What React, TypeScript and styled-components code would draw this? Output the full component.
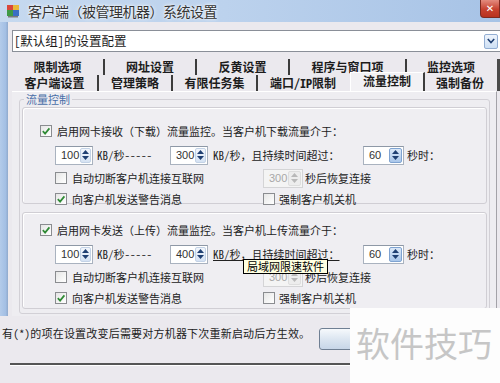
import styled, { createGlobalStyle } from 'styled-components';

const cjk = `"Noto Sans Mono CJK SC", "Noto Sans CJK SC", "Liberation Sans", sans-serif`;

const GlobalStyle = createGlobalStyle`
  html, body {
    margin: 0;
    padding: 0;
    background: #ebe9ee;
  }
  body {
    font-family: ${cjk};
  }
`;

type TabDef = { label: string; width: number; sep?: boolean; active?: boolean };

const topTabs: TabDef[] = [
  { label: '限制选项', width: 93, sep: true },
  { label: '网址设置', width: 92, sep: true },
  { label: '反黄设置', width: 93, sep: true },
  { label: '程序与窗口项', width: 117, sep: true },
  { label: '监控选项', width: 90 },
];

const bottomTabs: TabDef[] = [
  { label: '客户端设置', width: 87, sep: true },
  { label: '管理策略', width: 74, sep: true },
  { label: '有限任务集', width: 85, sep: true },
  { label: '端口/IP限制', width: 92 },
  { label: '流量控制', width: 75, sep: true, active: true },
  { label: '强制备份', width: 72 },
];

const sections = [
  {
    title: '启用网卡接收（下载）流量监控。当客户机下载流量介于：',
    low: '100',
    high: '300',
    hover: false,
    pt: 11,
  },
  {
    title: '启用网卡发送（上传）流量监控。当客户机上传流量介于：',
    low: '100',
    high: '400',
    hover: true,
    pt: 5,
  },
];

const CheckBox = ({ checked }: { checked?: boolean }) => (
  <Box>
    {checked ? (
      <svg width="10" height="10" viewBox="0 0 10 10">
        <path d="M1.8 5.2 L4.1 7.6 L8.4 2.4" stroke="#2f8a35" strokeWidth="1.7" fill="none" />
      </svg>
    ) : null}
  </Box>
);

const Spin = ({
  value,
  width,
  disabled,
  hot,
}: {
  value: string;
  width: number;
  disabled?: boolean;
  hot?: boolean;
}) => (
  <SpinBox $w={width} $disabled={disabled}>
    <SpinValue $disabled={disabled}>{value}</SpinValue>
    <SpinArrows $hot={hot} $disabled={disabled}>
      <svg width="7" height="4" viewBox="0 0 7 4">
        <path d="M0 4 L3.5 0 L7 4 Z" fill={disabled ? '#b9b9b9' : '#1f3f72'} />
      </svg>
      <svg width="7" height="4" viewBox="0 0 7 4">
        <path d="M0 0 L3.5 4 L7 0 Z" fill={disabled ? '#b9b9b9' : '#1f3f72'} />
      </svg>
    </SpinArrows>
  </SpinBox>
);

const AppIcon = () => (
  <svg width="14" height="14" viewBox="0 0 14 14">
    <rect x="1" y="1" width="6" height="5" fill="#d9473b" />
    <rect x="7" y="1" width="6" height="5" fill="#e8b83a" />
    <rect x="1" y="6" width="6" height="6" fill="#3f9a45" />
    <rect x="7" y="6" width="6" height="6" fill="#3b6fc4" />
    <rect x="2" y="12" width="10" height="1.5" fill="#7a7a7a" />
  </svg>
);

export default function App() {
  return (
    <>
      <GlobalStyle />
      <Window>
        <TitleBar>
          <AppIcon />
          <Title>客户端（被管理机器）系统设置</Title>
          <CloseButton>✕</CloseButton>
        </TitleBar>

        <Frame>
          <FrameEdge />
          <Main>
            <Combo>
              <ComboText>[默认组]的设置配置</ComboText>
              <ComboButton>
                <svg width="8" height="6" viewBox="0 0 8 6">
                  <path d="M0.8 1 L4 4.5 L7.2 1" stroke="#1f3f72" strokeWidth="1.6" fill="none" />
                </svg>
              </ComboButton>
            </Combo>

            <TabRow>
              {topTabs.map((t) => (
                <Tab key={t.label} $w={t.width} $sep={t.sep}>
                  {t.label}
                </Tab>
              ))}
              <TabEdge />
            </TabRow>
            <TabRow>
              {bottomTabs.map((t) =>
                t.active ? (
                  <ActiveTab key={t.label} $w={t.width}>
                    {t.label}
                  </ActiveTab>
                ) : (
                  <Tab key={t.label} $w={t.width} $sep={t.sep}>
                    {t.label}
                  </Tab>
                ),
              )}
              <TabEdge />
            </TabRow>

            <TabPage>
              <Group>
                <Legend>流量控制</Legend>
                {sections.map((s) => (
                  <Section key={s.title} $pt={s.pt}>
                    <Row $pl={17}>
                      <CheckBox checked />
                      <Label $ml={5}>{s.title}</Label>
                    </Row>
                    <Row $pl={32}>
                      <Spin value={s.low} width={38} />
                      <Label $ml={4} $w={73}>
                        KB/秒-----
                      </Label>
                      <Spin value={s.high} width={38} />
                      <Label $ml={5} $w={150} $underline={s.hover}>
                        KB/秒，且持续时间超过：
                      </Label>
                      <Spin value="60" width={41} hot />
                      <Label $ml={3}>秒时：</Label>
                    </Row>
                    <Row $pl={32}>
                      <CheckCell $w={208}>
                        <CheckBox />
                        <Label $ml={5}>自动切断客户机连接互联网</Label>
                      </CheckCell>
                      <Spin value="300" width={40} disabled />
                      <Label $ml={2}>秒后恢复连接</Label>
                    </Row>
                    <Row $pl={32}>
                      <CheckCell $w={208}>
                        <CheckBox checked />
                        <Label $ml={5}>向客户机发送警告消息</Label>
                      </CheckCell>
                      <CheckCell>
                        <CheckBox />
                        <Label $ml={4}>强制客户机关机</Label>
                      </CheckCell>
                    </Row>
                  </Section>
                ))}
              </Group>
            </TabPage>
          </Main>
        </Frame>

        <Footer>
          <FooterText>有(*)的项在设置改变后需要对方机器下次重新启动后方生效。</FooterText>
          <OkButton />
        </Footer>
        <Rule />

        <Tooltip>局域网限速软件</Tooltip>
        <Watermark>软件技巧</Watermark>
      </Window>
    </>
  );
}

const Window = styled.div`
  position: relative;
  width: 500px;
  height: 383px;
  overflow: hidden;
  background: #ebe9ee;
  display: flex;
  flex-direction: column;
`;

const TitleBar = styled.div`
  height: 22px;
  flex: 0 0 22px;
  display: flex;
  align-items: center;
  padding-left: 6px;
  background: linear-gradient(to right, #c6d9ef 0%, #bcd2ed 45%, #a7c3e6 100%);
  box-sizing: border-box;
`;

const Title = styled.div`
  margin-left: 8px;
  font-family: "Noto Sans CJK SC", sans-serif;
  font-size: 14px;
  letter-spacing: -0.5px;
  line-height: 20px;
  color: #333333;
  text-shadow: 0 0 4px #ffffff, 0 0 2px #ffffff;
  flex: 1;
`;

const CloseButton = styled.div`
  align-self: flex-start;
  width: 18px;
  height: 17px;
  background: linear-gradient(#e48b7e, #c7412f 55%, #b8321f);
  border: 1px solid #7e2a20;
  border-top: none;
  border-radius: 0 0 0 4px;
  color: #ffffff;
  font-family: "DejaVu Sans", sans-serif;
  font-size: 10px;
  font-weight: bold;
  display: flex;
  align-items: center;
  justify-content: center;
`;

const Frame = styled.div`
  display: flex;
  height: 294px;
  flex: 0 0 294px;
`;

const FrameEdge = styled.div`
  width: 8px;
  flex: 0 0 8px;
  background: linear-gradient(to right, #b3cbea, #a3bfe4 70%, #8fa9cc);
`;

const Main = styled.div`
  flex: 1;
  display: flex;
  flex-direction: column;
  min-width: 0;
`;

const Combo = styled.div`
  margin: 8px -2px 0 4px;
  height: 22px;
  box-sizing: border-box;
  border: 1px solid #8a8f98;
  background: #ffffff;
  display: flex;
  align-items: center;
  justify-content: space-between;
`;

const ComboText = styled.div`
  padding-left: 1px;
  font-size: 12.5px;
  line-height: 18px;
  color: #1a1a1a;
`;

const ComboButton = styled.div`
  width: 14px;
  height: 15px;
  margin-right: 3px;
  box-sizing: border-box;
  border: 1px solid #93aed3;
  border-radius: 2px;
  background: linear-gradient(#eef4fc, #cddff4);
  display: flex;
  align-items: center;
  justify-content: center;
`;

const TabRow = styled.div`
  display: flex;
  height: 16px;
  margin-left: 4px;
  margin-top: 7px;
  & + & {
    margin-top: 0;
  }
`;

const Tab = styled.div<{ $w: number; $sep?: boolean }>`
  width: ${({ $w }) => $w}px;
  flex: 0 0 ${({ $w }) => $w}px;
  box-sizing: border-box;
  height: 16px;
  border-right: 2px solid ${({ $sep }) => ($sep ? '#3c3c3c' : 'transparent')};
  font-size: 12px;
  font-weight: 700;
  line-height: 16px;
  color: #1c1c1c;
  text-align: center;
`;

const ActiveTab = styled.div<{ $w: number }>`
  width: ${({ $w }) => $w}px;
  flex: 0 0 ${({ $w }) => $w}px;
  box-sizing: border-box;
  height: 19px;
  margin-top: -3px;
  padding-bottom: 3px;
  background: #f2f1f4;
  border-left: 1px solid #ffffff;
  border-top: 1px solid #ffffff;
  border-right: 2px solid #3c3c3c;
  font-size: 12px;
  font-weight: 700;
  line-height: 15px;
  color: #1c1c1c;
  text-align: center;
`;

const TabEdge = styled.div`
  width: 3px;
  height: 16px;
  background: #4a4a4a;
`;

const TabPage = styled.div`
  margin-left: 4px;
  width: 485px;
  flex: 1;
  box-sizing: border-box;
  border-top: 1px solid #ffffff;
  border-right: 1px solid #a3a2a8;
  background: #eeedf1;
  padding: 0 6px 0 7px;
`;

const Group = styled.fieldset`
  margin: 0;
  padding: 1px 2px 4px 2px;
  border: 1px solid #d2d0d6;
  border-radius: 3px;
  box-sizing: border-box;
  display: flex;
  flex-direction: column;
  gap: 8px;
`;

const Legend = styled.legend`
  margin-left: 2px;
  padding: 0 2px;
  font-size: 11px;
  line-height: 14px;
  color: #4a6fa8;
`;

const Section = styled.div<{ $pt: number }>`
  height: 97px;
  box-sizing: border-box;
  padding-top: ${({ $pt }) => $pt}px;
  border: 1px solid #d0ced4;
  border-radius: 3px;
  box-shadow: inset 1px 1px 0 #ffffff;
  background: #efeef2;
  display: grid;
  grid-template-rows: 24px 24px 22px 20px;
`;

const Row = styled.div<{ $pl: number }>`
  display: flex;
  align-items: center;
  padding-left: ${({ $pl }) => $pl}px;
`;

const CheckCell = styled.div<{ $w?: number }>`
  display: flex;
  align-items: center;
  ${({ $w }) => ($w ? `width: ${$w}px; flex: 0 0 ${$w}px;` : '')}
`;

const Label = styled.span<{ $ml?: number; $w?: number; $underline?: boolean }>`
  margin-left: ${({ $ml }) => $ml ?? 0}px;
  ${({ $w }) => ($w ? `width: ${$w}px; flex: 0 0 ${$w}px;` : '')}
  font-size: 11px;
  line-height: 14px;
  color: #222222;
  white-space: nowrap;
  text-decoration: ${({ $underline }) => ($underline ? 'underline' : 'none')};
`;

const Box = styled.div`
  width: 12px;
  height: 12px;
  flex: 0 0 12px;
  box-sizing: border-box;
  border: 1px solid #8a8c90;
  background: linear-gradient(135deg, #e6e6e6, #ffffff);
  display: flex;
  align-items: center;
  justify-content: center;
`;

const SpinBox = styled.div<{ $w: number; $disabled?: boolean }>`
  width: ${({ $w }) => $w}px;
  flex: 0 0 ${({ $w }) => $w}px;
  height: 19px;
  box-sizing: border-box;
  border: 1px solid ${({ $disabled }) => ($disabled ? '#d4d4d6' : '#a9b2bf')};
  border-top-color: ${({ $disabled }) => ($disabled ? '#d4d4d6' : '#8e98a6')};
  background: ${({ $disabled }) => ($disabled ? '#f4f4f4' : '#ffffff')};
  display: flex;
  align-items: stretch;
`;

const SpinValue = styled.div<{ $disabled?: boolean }>`
  flex: 1;
  padding-left: 5px;
  font-family: "Liberation Sans", Arial, sans-serif;
  font-size: 11px;
  line-height: 17px;
  color: ${({ $disabled }) => ($disabled ? '#a8a8a8' : '#333333')};
`;

const SpinArrows = styled.div<{ $hot?: boolean; $disabled?: boolean }>`
  width: 11px;
  margin: 1px;
  border-radius: 2px;
  border: 1px solid
    ${({ $hot, $disabled }) => ($disabled ? '#dedede' : $hot ? '#7fa3d1' : '#c3d2e6')};
  background: ${({ $hot, $disabled }) =>
    $disabled
      ? '#ededed'
      : $hot
        ? 'linear-gradient(#dbe8f8, #a9c6ea)'
        : 'linear-gradient(#f2f6fc, #d5e2f3)'};
  display: flex;
  flex-direction: column;
  align-items: center;
  justify-content: center;
  gap: 2px;
`;

const Footer = styled.div`
  height: 47px;
  display: flex;
  align-items: flex-start;
  padding: 10px 0 0 2px;
  box-sizing: border-box;
`;

const FooterText = styled.div`
  font-size: 11px;
  line-height: 14px;
  letter-spacing: 0.2px;
  color: #222222;
  white-space: nowrap;
`;

const OkButton = styled.div`
  margin: 2px 0 0 9px;
  width: 80px;
  height: 22px;
  box-sizing: border-box;
  border: 1px solid #6f7f93;
  border-radius: 3px;
  background: linear-gradient(#f6f9fc, #dce6f1 50%, #c7d6e8);
`;

const Rule = styled.div`
  margin-left: 10px;
  height: 0;
  border-top: 2px solid #555555;
  border-bottom: 1px solid #ffffff;
`;

const Tooltip = styled.div`
  position: absolute;
  left: 243px;
  top: 259px;
  padding: 0 3px;
  border: 1px solid #000000;
  background: #ffffe1;
  font-size: 11px;
  line-height: 13px;
  color: #000000;
  white-space: nowrap;
`;

const Watermark = styled.div`
  position: absolute;
  left: 350px;
  top: 308px;
  right: 0;
  bottom: 0;
  background: #fdfdfd;
  padding: 16px 0 0 6px;
  font-family: "Noto Sans CJK SC", sans-serif;
  font-size: 34px;
  line-height: 38px;
  color: #c6c6c6;
  white-space: nowrap;
`;
